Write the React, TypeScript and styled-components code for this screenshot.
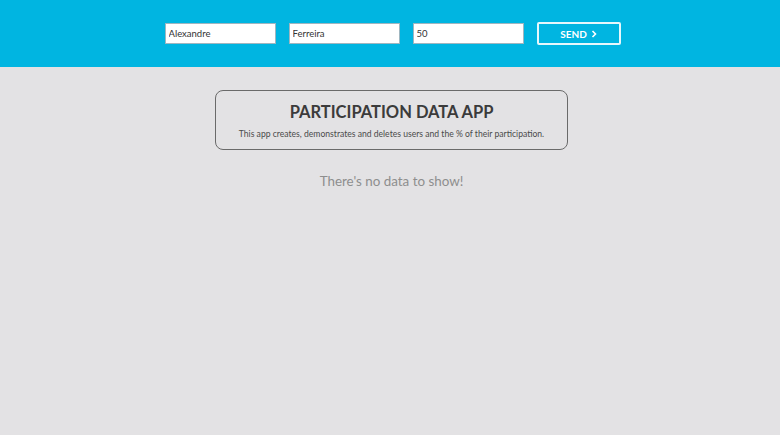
import React from "react";
import styled, { createGlobalStyle } from "styled-components";

const Global = createGlobalStyle`
  html, body { margin: 0; padding: 0; height: 100%; }
  body { background: #e3e2e4; font-family: Lato, "Open Sans", "Liberation Sans", sans-serif; }
  #root { min-height: 100%; }
`;

const Page = styled.div`
  min-height: 435px;
  background: #e3e2e4;
  display: flex;
  flex-direction: column;
`;

const Header = styled.header`
  height: 67px;
  background: #00b5e1;
  display: flex;
  align-items: center;
  justify-content: center;
  gap: 13px;
  padding-left: 5px;
  box-sizing: border-box;
`;

const Input = styled.input`
  width: 111px;
  height: 21px;
  box-sizing: border-box;
  border: 1px solid #9fb6c0;
  background: #fff;
  font-family: Lato, "Open Sans", "Liberation Sans", sans-serif;
  font-size: 9.5px;
  color: #333;
  padding: 0 3px;
  outline: none;
`;

const SendButton = styled.button`
  width: 84px;
  height: 23px;
  box-sizing: border-box;
  border: 2px solid #e6f7fc;
  border-radius: 2px;
  background: transparent;
  color: #fff;
  font-family: Lato, "Open Sans", "Liberation Sans", sans-serif;
  font-weight: 700;
  font-size: 10px;
  display: flex;
  align-items: center;
  justify-content: center;
  gap: 4px;
  cursor: pointer;
`;

const Main = styled.main`
  display: flex;
  flex-direction: column;
  align-items: center;
  padding-top: 23px;
`;

const Card = styled.div`
  width: 353px;
  height: 60px;
  box-sizing: border-box;
  border: 1px solid #6a6a6a;
  border-radius: 8px;
  display: flex;
  flex-direction: column;
  align-items: center;
  justify-content: center;
  gap: 7px;
  margin-left: 3px;
  padding-top: 2px;
`;

const Title = styled.h1`
  margin: 0;
  font-size: 16.5px;
  font-weight: 700;
  color: #3b3b3b;
  line-height: 20px;
`;

const Subtitle = styled.p`
  margin: 0;
  font-size: 8.6px;
  color: #4a4a4a;
  line-height: 11px;
`;

const Empty = styled.p`
  margin: 23px 0 0 3px;
  font-size: 13.4px;
  color: #8e8e8e;
`;

export default function App() {
  return (
    <Page>
      <Global />
      <Header>
        <Input defaultValue="Alexandre" />
        <Input defaultValue="Ferreira" />
        <Input defaultValue="50" />
        <SendButton>
          SEND
          <svg width="6" height="8" viewBox="0 0 6 8">
            <path d="M1.5 1 L4.5 4 L1.5 7" stroke="#fff" strokeWidth="1.6" fill="none" />
          </svg>
        </SendButton>
      </Header>
      <Main>
        <Card>
          <Title>PARTICIPATION DATA APP</Title>
          <Subtitle>This app creates, demonstrates and deletes users and the % of their participation.</Subtitle>
        </Card>
        <Empty>There's no data to show!</Empty>
      </Main>
    </Page>
  );
}
